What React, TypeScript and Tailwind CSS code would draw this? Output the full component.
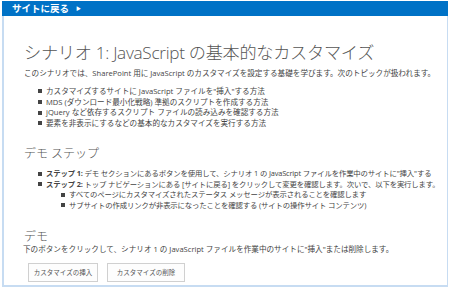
import React from "react";

const Sq = () => <span className="inline-block w-[4px] h-[4px] bg-[#444] mr-[4px] mb-[1px] align-middle" />;

export default function App() {
  return (
    <div
      className="w-[450px] h-[288px] overflow-hidden bg-white pt-[1px] px-[2px] text-[#444]"
      style={{ fontFamily: '"Open Sans", "Noto Sans CJK JP", sans-serif' }}
    >
      <div className="h-[15px] bg-[#0072c6] flex items-center pl-[10px] text-white text-[9.5px] font-bold leading-none">
        <span>サイトに戻る</span>
        <span className="ml-[7px] text-[5px]">▶</span>
      </div>
      <div className="h-[271px] overflow-hidden border-l-2 border-r border-b-2 border-[#c7dcf2] pl-[20px] pr-[4px]">
        <h1 className="mt-[26px] text-[17.2px] font-light leading-[22px] text-[#555] tracking-[-0.3px] whitespace-nowrap">
          シナリオ 1: JavaScript の基本的なカスタマイズ
        </h1>
        <p className="mt-[4px] text-[7.6px] leading-[10px] whitespace-nowrap">
          このシナリオでは、SharePoint 用に JavaScript のカスタマイズを設定する基礎を学びます。次のトピックが扱われます。
        </p>
        <ul className="mt-[8px] pl-[14px] text-[7.6px] leading-[10.6px] whitespace-nowrap">
          <li><Sq />カスタマイズするサイトに JavaScript ファイルを"挿入"する方法</li>
          <li><Sq />MDS (ダウンロード最小化戦略) 準拠のスクリプトを作成する方法</li>
          <li><Sq />jQuery など依存するスクリプト ファイルの読み込みを確認する方法</li>
          <li><Sq />要素を非表示にするなどの基本的なカスタマイズを実行する方法</li>
        </ul>
        <h2 className="mt-[18px] text-[12px] font-light leading-[16px] text-[#555]">デモ ステップ</h2>
        <ul className="mt-[6px] pl-[14px] text-[7.4px] leading-[10.4px] whitespace-nowrap tracking-[-0.15px]">
          <li><Sq /><b className="font-bold">ステップ 1:</b> デモ セクションにあるボタンを使用して、シナリオ 1 の JavaScript ファイルを作業中のサイトに"挿入"する</li>
          <li><Sq /><b className="font-bold">ステップ 2:</b> トップ ナビゲーションにある [サイトに戻る] をクリックして変更を確認します。次いで、以下を実行します。</li>
          <li className="pl-[23px]"><Sq />すべてのページにカスタマイズされたステータス メッセージが表示されることを確認します</li>
          <li className="pl-[23px]"><Sq />サブサイトの作成リンクが非表示になったことを確認する (サイトの操作サイト コンテンツ)</li>
        </ul>
        <h2 className="mt-[19px] text-[12px] font-light leading-[16px] text-[#555]">デモ</h2>
        <p className="-mt-[1px] -ml-[1px] text-[7.6px] leading-[10px] whitespace-nowrap">
          下のボタンをクリックして、シナリオ 1 の JavaScript ファイルを作業中のサイトに"挿入"または削除します。
        </p>
        <div className="mt-[9px] ml-[4px] flex gap-[9px]">
          <button className="w-[70px] h-[19px] border border-[#d0d0d0] bg-[#fdfdfd] text-[6.5px] text-[#555]">カスタマイズの挿入</button>
          <button className="w-[78px] h-[19px] border border-[#d0d0d0] bg-[#fdfdfd] text-[6.5px] text-[#555]">カスタマイズの削除</button>
        </div>
      </div>
    </div>
  );
}
